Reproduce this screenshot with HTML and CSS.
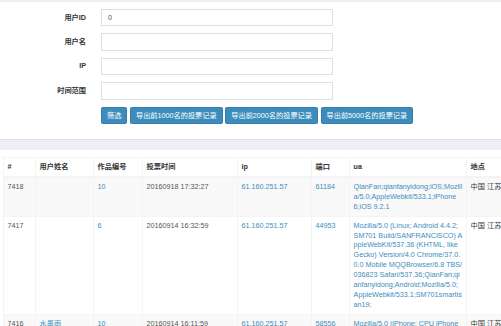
FILE: index.html
```html
<!DOCTYPE html>
<html lang="zh-CN">
<head>
    <meta charset="UTF-8">
    <meta name="viewport" content="width=device-width, initial-scale=1.0">
    <title>投票记录</title>
    <link rel="stylesheet" href="styles.css">
</head>
<body>
    <div class="filter">
        <form class="filter-form">
            <div class="form-row">
                <label for="userId">用户ID</label>
                <input type="text" id="userId" value="0">
            </div>
            <div class="form-row">
                <label for="userName">用户名</label>
                <input type="text" id="userName">
            </div>
            <div class="form-row">
                <label for="ip">IP</label>
                <input type="text" id="ip">
            </div>
            <div class="form-row">
                <label for="timeRange">时间范围</label>
                <input type="text" id="timeRange">
            </div>
            <div class="actions">
                <button type="submit" class="btn">筛选</button>
                <button type="button" class="btn">导出前1000名的投票记录</button>
                <button type="button" class="btn">导出前2000名的投票记录</button>
                <button type="button" class="btn">导出前5000名的投票记录</button>
            </div>
        </form>
    </div>

    <div class="band"></div>

    <div class="box">
        <table class="records">
            <colgroup>
                <col style="width: 32px">
                <col style="width: 58px">
                <col style="width: 49px">
                <col style="width: 95px">
                <col style="width: 74px">
                <col style="width: 38px">
                <col style="width: 117px">
                <col style="width: 70px">
            </colgroup>
            <thead>
                <tr>
                    <th>#</th>
                    <th>用户姓名</th>
                    <th>作品编号</th>
                    <th>投票时间</th>
                    <th>ip</th>
                    <th>端口</th>
                    <th>ua</th>
                    <th>地点</th>
                </tr>
            </thead>
            <tbody>
                <tr>
                    <td>7418</td>
                    <td></td>
                    <td><a href="#">10</a></td>
                    <td>20160918 17:32:27</td>
                    <td><a href="#">61.160.251.57</a></td>
                    <td><a href="#">61184</a></td>
                    <td class="ua"><a href="#">QianFan;qianfanyidong;iOS;Mozilla/5.0;AppleWebkit/533.1;iPhone 6;iOS 9.2.1</a></td>
                    <td class="place">中国 江苏 南京</td>
                </tr>
                <tr>
                    <td>7417</td>
                    <td></td>
                    <td><a href="#">6</a></td>
                    <td>20160914 16:32:59</td>
                    <td><a href="#">61.160.251.57</a></td>
                    <td><a href="#">44953</a></td>
                    <td class="ua"><a href="#">Mozilla/5.0 (Linux; Android 4.4.2; SM701 Build/SANFRANCISCO) AppleWebKit/537.36 (KHTML, like Gecko) Version/4.0 Chrome/37.0.0.0 Mobile MQQBrowser/6.8 TBS/036823 Safari/537.36;QianFan;qianfanyidong;Android;Mozilla/5.0;AppleWebkit/533.1;SM701smartisan19;</a></td>
                    <td class="place">中国 江苏 南京</td>
                </tr>
                <tr>
                    <td>7416</td>
                    <td><a href="#">水墨雨</a></td>
                    <td><a href="#">10</a></td>
                    <td>20160914 16:11:59</td>
                    <td><a href="#">61.160.251.57</a></td>
                    <td><a href="#">58556</a></td>
                    <td class="ua"><a href="#">Mozilla/5.0 (iPhone; CPU iPhone OS 9_3_2 like Mac OS X) AppleWebKit/601.1.46 (KHTML, like Gecko) Mobile/13F69;QianFan;qianfanyidong;iOS;Mozilla/5.0;AppleWebkit/533.1;iPhone 6;iOS 9.3.2</a></td>
                    <td class="place">中国 江苏 南京</td>
                </tr>
            </tbody>
        </table>
    </div>
</body>
</html>
```

FILE: styles.css
```css
html, body {
    margin: 0;
    overflow: hidden;
}
body {
    font-family: "Liberation Sans", "Noto Sans CJK SC", sans-serif;
    font-size: 7.2px;
    line-height: 1.42857;
    color: #555;
    background: #fff;
}
a {
    color: #3c8dbc;
    text-decoration: none;
}
.filter {
    border-top: 2px solid #eee;
    height: 137px;
    background: #fff;
}
.filter-form {
    padding-top: 7px;
}
.form-row {
    display: flex;
    align-items: center;
    gap: 15px;
    height: 17.4px;
    margin-bottom: 7px;
}
.form-row label {
    width: 86px;
    text-align: right;
    font-weight: bold;
    color: #333;
}
.form-row input {
    width: 232px;
    height: 17.4px;
    box-sizing: border-box;
    border: 1px solid #dcdfe3;
    padding: 0 6px;
    font-family: inherit;
    font-size: 7.2px;
    color: #555;
    outline: none;
}
.actions {
    padding-left: 101px;
    display: flex;
    gap: 2.6px;
}
.btn {
    height: 17px;
    padding: 0 5px;
    background-color: #3c8dbc;
    border: 1px solid #367fa9;
    border-radius: 1.5px;
    color: #fff;
    font-family: inherit;
    font-size: 7.2px;
    cursor: pointer;
}
.band {
    height: 10px;
    background: #ecf0f5;
    border-top: 1px solid #dde1e6;
}
.box {
    background: #fff;
    padding: 7px 0 0 3px;
}
.records {
    table-layout: fixed;
    border-collapse: collapse;
    width: 533px;
    line-height: 9.9px;
}
.records th,
.records td {
    border: 1px solid #f4f4f4;
    padding: 4px 3.6px;
    text-align: left;
    vertical-align: top;
}
.records th {
    color: #333;
    font-weight: bold;
    border-bottom-width: 2px;
}
.records tbody tr:nth-child(odd) {
    background-color: #f9f9f9;
}
.records .ua {
    word-break: break-all;
}
.records .place {
    color: #333;
    white-space: nowrap;
}
```
